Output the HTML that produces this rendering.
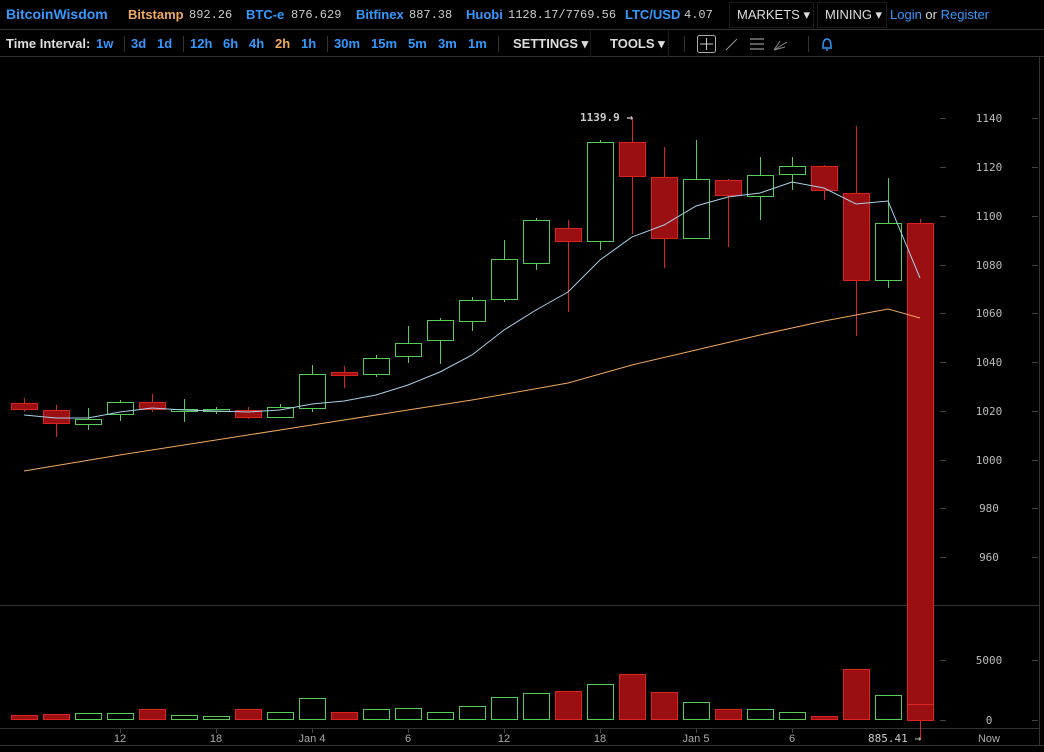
<!DOCTYPE html>
<html><head><meta charset="utf-8">
<style>
*{margin:0;padding:0;box-sizing:border-box}
body{width:1044px;height:752px;background:#000;overflow:hidden;font-family:"Liberation Sans",sans-serif;font-size:13px;color:#ddd;position:relative}
.bar{position:absolute;left:0;width:1044px;white-space:nowrap}
#top{top:0;height:30px;border-bottom:1px solid #333}
#sec{top:30px;height:27px;border-bottom:1px solid #333}
.t{position:absolute;top:7px}
.b{color:#3399ff}.o{color:#f0a860}.m{font-family:"Liberation Mono",monospace;font-size:12px;color:#ccc;top:8px}
.x{font-weight:bold}
.w{color:#ddd}
.s{position:absolute;top:6px;width:1px;height:16px;background:#333}
svg{position:absolute;left:0;top:0}
</style></head><body>
<div class="bar" id="top">
<span class="t b" style="left:6px;font-weight:bold;font-size:14px;top:6px">BitcoinWisdom</span>
<span class="t o x" style="left:128px">Bitstamp</span><span class="t m" style="left:189px">892.26</span>
<span class="t b x" style="left:246px">BTC-e</span><span class="t m" style="left:291px">876.629</span>
<span class="t b x" style="left:356px">Bitfinex</span><span class="t m" style="left:409px">887.38</span>
<span class="t b x" style="left:466px">Huobi</span><span class="t m" style="left:508px">1128.17/7769.56</span>
<span class="t b x" style="left:625px">LTC/USD</span><span class="t m" style="left:684px">4.07</span>
<div style="position:absolute;left:729px;top:2px;width:85px;height:26px;border:1px solid #1a1a1a"></div>
<span class="t w" style="left:737px">MARKETS ▾</span>
<div style="position:absolute;left:817px;top:2px;width:70px;height:26px;border:1px solid #1a1a1a"></div>
<span class="t w" style="left:825px">MINING ▾</span>
<span class="t b" style="left:890px">Login <span class="w">or</span> Register</span>
</div>
<div class="bar" id="sec">
<span class="t w" style="left:6px;font-weight:bold;top:6px">Time Interval:</span>
<span class="t b" style="left:96px;font-weight:bold;top:6px">1w</span>
<div class="s" style="left:124px"></div>
<span class="t b" style="left:131px;font-weight:bold;top:6px">3d</span>
<span class="t b" style="left:157px;font-weight:bold;top:6px">1d</span>
<div class="s" style="left:183px"></div>
<span class="t b" style="left:190px;font-weight:bold;top:6px">12h</span>
<span class="t b" style="left:223px;font-weight:bold;top:6px">6h</span>
<span class="t b" style="left:249px;font-weight:bold;top:6px">4h</span>
<span class="t o" style="left:275px;font-weight:bold;top:6px">2h</span>
<span class="t b" style="left:301px;font-weight:bold;top:6px">1h</span>
<div class="s" style="left:327px"></div>
<span class="t b" style="left:334px;font-weight:bold;top:6px">30m</span>
<span class="t b" style="left:371px;font-weight:bold;top:6px">15m</span>
<span class="t b" style="left:408px;font-weight:bold;top:6px">5m</span>
<span class="t b" style="left:438px;font-weight:bold;top:6px">3m</span>
<span class="t b" style="left:468px;font-weight:bold;top:6px">1m</span>
<div class="s" style="left:498px"></div>
<span class="t w" style="left:513px;font-weight:bold;top:6px">SETTINGS ▾</span>
<div class="s" style="left:590px;top:0;height:27px;background:#1a1a1a"></div>
<span class="t w" style="left:610px;font-weight:bold;top:6px">TOOLS ▾</span>
<div class="s" style="left:668px;top:0;height:27px;background:#1a1a1a"></div>
<div class="s" style="left:684px"></div>
<div class="s" style="left:808px"></div>
</div>
<svg width="1044" height="752" id="c" xmlns="http://www.w3.org/2000/svg">
<g stroke="#ccc" fill="none" stroke-width="1">
<rect x="697.5" y="35.5" width="18" height="17" rx="2" stroke="#aaa"/>
<path d="M706.5 38v12M700 44h13" stroke="#ccc"/>
<path d="M726 50l11-11" stroke="#999"/>
<path d="M750 39h14M750 44h14M750 49h14" stroke="#bbb"/>
<path d="M774 50l13-8M774 50l11-3M774 50l6-9" stroke="#888"/>
</g>
<path d="M822 48h10M823 47c0-5 1-8 4-8s4 3 4 8M826 50h2" stroke="#3399ff" fill="none" stroke-width="1.5"/>
<g stroke="#333"><path d="M0 605.5h1039M0 728.5h1039M0 745.5h1044M1039.5 57v688"/></g>
<g id="g"></g>
</svg>
<script>
var g=document.getElementById('g'),h='';
var MF='DejaVu Sans Mono,Liberation Mono,monospace';
var ticks=[[1140,118],[1120,167],[1100,216],[1080,265],[1060,313],[1040,362],[1020,411],[1000,460],[980,508],[960,557]];
ticks.forEach(function(t){h+='<path d="M940 '+(t[1]+.5)+'h6M1032 '+(t[1]+.5)+'h6" stroke="#444"/><text x="989" y="'+(t[1]+4)+'" fill="#bbb" font-family="'+MF+'" font-size="11" text-anchor="middle">'+t[0]+'</text>';});
h+='<path d="M940 660.5h6M1032 660.5h6M940 720.5h6M1032 720.5h6" stroke="#444"/>';
h+='<text x="989" y="664" fill="#bbb" font-family="'+MF+'" font-size="11" text-anchor="middle">5000</text><text x="989" y="724" fill="#bbb" font-family="'+MF+'" font-size="11" text-anchor="middle">0</text>';
var c=[[0,403,409,398,412,715],[0,410,423,405,437,714],[1,419,424,408,430,713],[1,402,414,400,421,713],[0,402,409,394,412,709],[1,409,411,399,422,715],[1,409,411,407,414,716],[0,410,417,407,419,709],[1,407,417,404,418,712],[1,374,408,365,412,698],[0,372,375,366,388,712],[1,358,374,355,377,709],[1,343,356,326,363,708],[1,320,340,318,364,712],[1,300,321,297,331,706],[1,259,299,240,302,697],[1,220,263,218,270,693],[0,228,241,220,312,691],[1,142,241,140,250,684],[0,142,176,118,234,674],[0,177,238,147,268,692],[1,179,238,140,238,702],[0,180,195,179,247,709],[1,175,196,157,220,709],[1,166,174,157,190,712],[0,166,190,165,200,716],[0,193,280,126,336,669],[1,223,280,178,288,695],[0,223,720,219,740,704]];
c.forEach(function(d,i){var x=24+i*32,col=d[0]?'#5c5':'#d22',f=d[0]?'none':'#9a0f12';
h+='<path d="M'+(x+.5)+' '+d[3]+'V'+d[4]+'" stroke="'+col+'"/>';
var bh=Math.max(d[2]-d[1],1);
h+='<rect x="'+(x-12.5)+'" y="'+(d[1]+.5)+'" width="26" height="'+bh+'" fill="'+(d[0]?'#000':f)+'" stroke="'+col+'"/>';
if(i<28){h+='<rect x="'+(x-12.5)+'" y="'+(d[5]+.5)+'" width="26" height="'+(719-d[5])+'" fill="'+(d[0]?'none':f)+'" stroke="'+col+'"/>';}
else{h+='<path d="M907 704.5h26" stroke="#d22"/>';}
});
h+='<polyline fill="none" stroke="#f0a860" points="24,471 120,455 216,440 312,425 408,410 472,400 568,383 632,365 696,350 760,335 824,321 888,309 920,318"/>';
h+='<polyline fill="none" stroke="#a8d0e8" points="24,415 56,418 88,418 120,412 152,408 184,410 216,411 248,412 280,410 312,404 344,401 376,395 408,385 440,372 472,355 504,330 536,310 568,292 600,260 632,237 664,225 696,206 728,197 760,193 792,182 824,188 856,204 888,201 920,278"/>';
h+='<text x="580" y="121" fill="#ccc" font-family="'+MF+'" font-size="11" font-weight="bold">1139.9 →</text>';
[[120,'12'],[216,'18'],[312,'Jan 4'],[408,'6'],[504,'12'],[600,'18'],[696,'Jan 5'],[792,'6']].forEach(function(l){h+='<text x="'+l[0]+'" y="742" fill="#aaa" font-family="Liberation Sans,sans-serif" font-size="11" text-anchor="middle">'+l[1]+'</text><path d="M'+(l[0]+.5)+' 729v4" stroke="#444"/>';});
h+='<text x="868" y="742" fill="#ccc" font-family="'+MF+'" font-size="11">885.41 →</text><text x="989" y="742" fill="#aaa" font-family="Liberation Sans,sans-serif" font-size="11" text-anchor="middle">Now</text>';
g.innerHTML=h;
</script>
</body></html>
